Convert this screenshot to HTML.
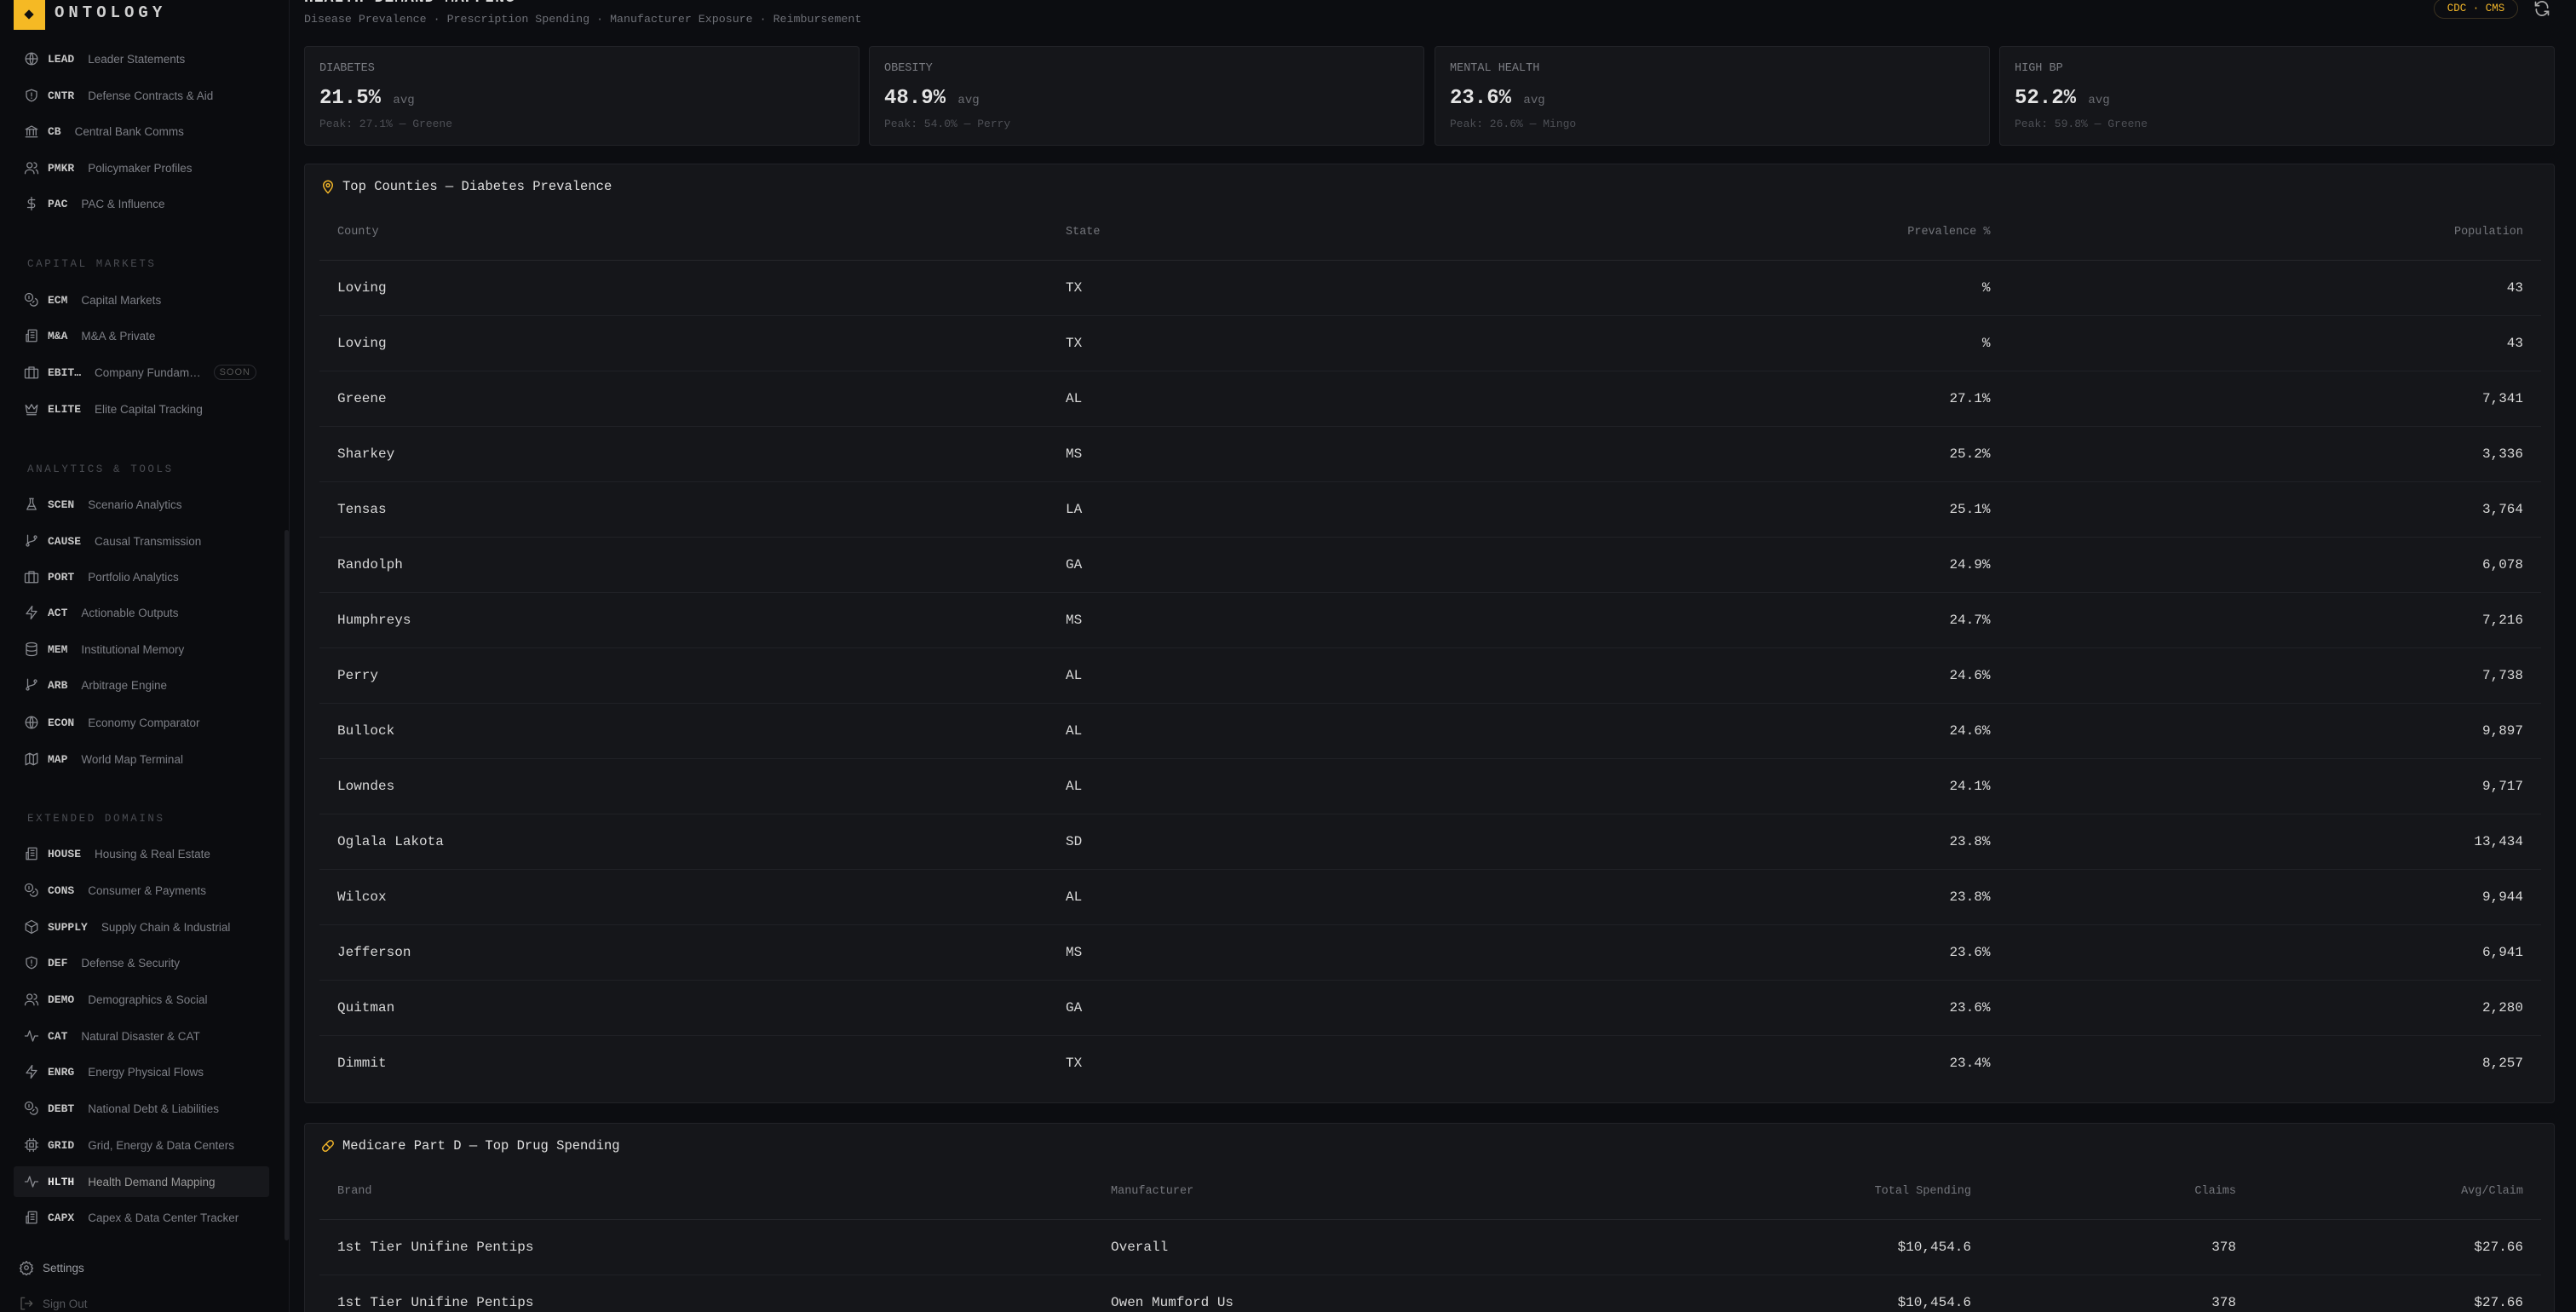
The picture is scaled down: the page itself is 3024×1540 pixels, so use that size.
<!DOCTYPE html>
<html><head><meta charset="utf-8"><style>
*{margin:0;padding:0;box-sizing:border-box}
html,body{width:3024px;height:1540px;overflow:hidden;background:#0c0d11;font-family:"Liberation Mono",monospace;color:#d6d6d6}
#side{position:absolute;left:0;top:0;width:340px;height:1540px;background:#0b0c0f;border-right:1px solid #1a1b20;overflow:hidden}
.logo{position:absolute;left:16px;top:0;width:37px;height:35px;background:#f5b924}
.logo i{position:absolute;left:14px;top:13px;width:8px;height:8px;background:#111;transform:rotate(45deg)}
.brand{position:absolute;left:64px;top:4px;font-size:19px;font-weight:bold;letter-spacing:5px;color:#d0d0d0}
.it{position:absolute;left:28px;height:24px;display:flex;align-items:center;white-space:nowrap}
.it svg{width:18px;height:18px;margin-right:10px;flex:none}
.it b{font-size:13px;color:#c8c8c8;font-weight:bold;margin-right:16px}
.it span{font-family:"Liberation Sans",sans-serif;font-size:13.5px;color:#7d7f86}
.sec{position:absolute;left:32px;font-size:12.5px;letter-spacing:2.6px;color:#4a4c52}
.soon{font-family:"Liberation Sans",sans-serif;font-size:11px;color:#555;border:1px solid #2a2b30;border-radius:10px;padding:2px 6px;margin-left:15px;letter-spacing:1px}
.hl{position:absolute;left:16px;top:1369px;width:300px;height:36px;background:#17181c;border-radius:3px}
.sb{position:absolute;left:334px;top:622px;width:5px;height:834px;background:#1d1e23;border-radius:3px}
#main{position:absolute;left:340px;top:0;width:2684px;height:1540px;overflow:hidden}
.ttl{position:absolute;left:17px;top:-12px;font-size:18px;font-weight:bold;letter-spacing:1px;color:#ddd}
.sub{position:absolute;left:17px;top:15px;font-size:13.3px;color:#6e7077}
.badge{position:absolute;left:2517px;top:-2px;width:99px;height:24px;border:1px solid #3a3120;border-radius:12px;color:#f0b429;font-size:12.5px;text-align:center;line-height:22px}
.card{position:absolute;top:54px;height:117px;width:652px;background:#15161a;border:1px solid #222328;border-radius:4px}
.card .l{position:absolute;left:17px;top:18px;font-size:13.5px;color:#7a7c82}
.card .v{position:absolute;left:17px;top:47px;font-size:24px;font-weight:bold;color:#e4e4e4}
.card .v small{font-size:14px;font-weight:normal;color:#6a6c72}
.card .p{position:absolute;left:17px;top:83px;font-size:13px;color:#4d4f55}
.panel{position:absolute;left:17px;width:2642px;background:#15161a;border:1px solid #222328;border-radius:4px}
.ph{position:absolute;left:18px;top:16px;display:flex;align-items:center;font-size:15.5px;color:#e0e0e0}
.ph svg{margin-right:8px}
table{position:absolute;left:17px;width:2608px;border-collapse:collapse;font-size:16px}
th{font-weight:normal;font-size:13.5px;color:#74767c;height:64px;text-align:left;border-bottom:1px solid #25262b;padding:0 21px}
td{height:65px;border-bottom:1px solid #202126;padding:0 21px;color:#d8d8d8}
tr:last-child td{border-bottom:none}
.r{text-align:right}
</style></head><body>
<div id="side">
<div class="logo"><i></i></div><div class="brand">ONTOLOGY</div>
<div class="hl"></div>
<div class="sb"></div>
<svg width="0" height="0" style="position:absolute"><defs>
<symbol id="globe" viewBox="0 0 24 24"><circle cx="12" cy="12" r="9"/><path d="M3 12h18M12 3c3 3 3 15 0 18M12 3c-3 3-3 15 0 18"/></symbol>
<symbol id="shield" viewBox="0 0 24 24"><path d="M12 3l8 3v6c0 5-4 8-8 9-4-1-8-4-8-9V6z"/><path d="M12 8v5M12 16v.5"/></symbol>
<symbol id="bank" viewBox="0 0 24 24"><path d="M3 9l9-5 9 5zM5 10v8M9 10v8M15 10v8M19 10v8M3 21h18"/></symbol>
<symbol id="users" viewBox="0 0 24 24"><circle cx="9" cy="8" r="4"/><path d="M2 21c0-4 3-6 7-6s7 2 7 6M16 4a4 4 0 010 8M19 15c2 1 3 3 3 6"/></symbol>
<symbol id="dollar" viewBox="0 0 24 24"><path d="M12 2v20M17 6H10a3 3 0 000 6h4a3 3 0 010 6H6"/></symbol>
<symbol id="coins" viewBox="0 0 24 24"><circle cx="8" cy="8" r="6"/><path d="M18 10a6 6 0 11-8 8M8 6v4M16 14l-2 2"/></symbol>
<symbol id="bldg" viewBox="0 0 24 24"><rect x="7" y="3" width="13" height="18" rx="1"/><path d="M7 10H4v11h3M11 7h5M11 11h5M11 15h5"/></symbol>
<symbol id="brief" viewBox="0 0 24 24"><rect x="2" y="7" width="20" height="14" rx="1"/><path d="M8 7V4h8v3M8 7v14M16 7v14"/></symbol>
<symbol id="crown" viewBox="0 0 24 24"><path d="M3 6l5 6 4-7 4 7 5-6-2 12H5zM5 21h14"/></symbol>
<symbol id="flask" viewBox="0 0 24 24"><path d="M9 3h6M10 3v7l-5 10h14l-5-10V3M7 15h10"/></symbol>
<symbol id="branch" viewBox="0 0 24 24"><circle cx="6" cy="18" r="2"/><circle cx="18" cy="6" r="2"/><path d="M6 3v13M18 8c0 6-12 4-12 8"/></symbol>
<symbol id="bolt" viewBox="0 0 24 24"><path d="M13 2L4 14h8l-1 8 9-12h-8z"/></symbol>
<symbol id="db" viewBox="0 0 24 24"><ellipse cx="12" cy="5" rx="8" ry="3"/><path d="M4 5v14c0 2 4 3 8 3s8-1 8-3V5M4 12c0 2 4 3 8 3s8-1 8-3"/></symbol>
<symbol id="map" viewBox="0 0 24 24"><path d="M3 6l6-3 6 3 6-3v15l-6 3-6-3-6 3zM9 3v15M15 6v15"/></symbol>
<symbol id="box" viewBox="0 0 24 24"><path d="M12 2l9 5v10l-9 5-9-5V7zM3 7l9 5 9-5M12 12v10"/></symbol>
<symbol id="pulse" viewBox="0 0 24 24"><path d="M2 12h4l3-8 5 16 3-8h5"/></symbol>
<symbol id="chip" viewBox="0 0 24 24"><rect x="5" y="5" width="14" height="14" rx="2"/><rect x="9" y="9" width="6" height="6"/><path d="M9 2v3M15 2v3M9 19v3M15 19v3M2 9h3M2 15h3M19 9h3M19 15h3"/></symbol>
<symbol id="gear" viewBox="0 0 24 24"><circle cx="12" cy="12" r="3"/><path d="M12 2l2 3 3-1 1 3 3 1-1 3 2 2-2 2 1 3-3 1-1 3-3-1-2 3-2-3-3 1-1-3-3-1 1-3-2-2 2-2-1-3 3-1 1-3 3 1z"/></symbol>
<symbol id="out" viewBox="0 0 24 24"><path d="M9 3H4v18h5M10 12h11M17 8l4 4-4 4"/></symbol>
</defs></svg>
<div id="nav" style="fill:none;stroke:#8a8c92;stroke-width:1.7;stroke-linecap:round;stroke-linejoin:round">
<div class="it" style="top:57px"><svg><use href="#globe"/></svg><b>LEAD</b><span>Leader Statements</span></div>
<div class="it" style="top:100px"><svg><use href="#shield"/></svg><b>CNTR</b><span>Defense Contracts &amp; Aid</span></div>
<div class="it" style="top:142px"><svg><use href="#bank"/></svg><b>CB</b><span>Central Bank Comms</span></div>
<div class="it" style="top:185px"><svg><use href="#users"/></svg><b>PMKR</b><span>Policymaker Profiles</span></div>
<div class="it" style="top:227px"><svg><use href="#dollar"/></svg><b>PAC</b><span>PAC &amp; Influence</span></div>
<div class="sec" style="top:303px">CAPITAL MARKETS</div>
<div class="it" style="top:340px"><svg><use href="#coins"/></svg><b>ECM</b><span>Capital Markets</span></div>
<div class="it" style="top:382px"><svg><use href="#bldg"/></svg><b>M&amp;A</b><span>M&amp;A &amp; Private</span></div>
<div class="it" style="top:425px"><svg><use href="#brief"/></svg><b>EBIT…</b><span>Company Fundam…</span><em class="soon" style="font-style:normal">SOON</em></div>
<div class="it" style="top:468px"><svg><use href="#crown"/></svg><b>ELITE</b><span>Elite Capital Tracking</span></div>
<div class="sec" style="top:544px">ANALYTICS &amp; TOOLS</div>
<div class="it" style="top:580px"><svg><use href="#flask"/></svg><b>SCEN</b><span>Scenario Analytics</span></div>
<div class="it" style="top:623px"><svg><use href="#branch"/></svg><b>CAUSE</b><span>Causal Transmission</span></div>
<div class="it" style="top:665px"><svg><use href="#brief"/></svg><b>PORT</b><span>Portfolio Analytics</span></div>
<div class="it" style="top:707px"><svg><use href="#bolt"/></svg><b>ACT</b><span>Actionable Outputs</span></div>
<div class="it" style="top:750px"><svg><use href="#db"/></svg><b>MEM</b><span>Institutional Memory</span></div>
<div class="it" style="top:792px"><svg><use href="#branch"/></svg><b>ARB</b><span>Arbitrage Engine</span></div>
<div class="it" style="top:836px"><svg><use href="#globe"/></svg><b>ECON</b><span>Economy Comparator</span></div>
<div class="it" style="top:879px"><svg><use href="#map"/></svg><b>MAP</b><span>World Map Terminal</span></div>
<div class="sec" style="top:954px">EXTENDED DOMAINS</div>
<div class="it" style="top:990px"><svg><use href="#bldg"/></svg><b>HOUSE</b><span>Housing &amp; Real Estate</span></div>
<div class="it" style="top:1033px"><svg><use href="#coins"/></svg><b>CONS</b><span>Consumer &amp; Payments</span></div>
<div class="it" style="top:1076px"><svg><use href="#box"/></svg><b>SUPPLY</b><span>Supply Chain &amp; Industrial</span></div>
<div class="it" style="top:1118px"><svg><use href="#shield"/></svg><b>DEF</b><span>Defense &amp; Security</span></div>
<div class="it" style="top:1161px"><svg><use href="#users"/></svg><b>DEMO</b><span>Demographics &amp; Social</span></div>
<div class="it" style="top:1204px"><svg><use href="#pulse"/></svg><b>CAT</b><span>Natural Disaster &amp; CAT</span></div>
<div class="it" style="top:1246px"><svg><use href="#bolt"/></svg><b>ENRG</b><span>Energy Physical Flows</span></div>
<div class="it" style="top:1289px"><svg><use href="#coins"/></svg><b>DEBT</b><span>National Debt &amp; Liabilities</span></div>
<div class="it" style="top:1332px"><svg><use href="#chip"/></svg><b>GRID</b><span>Grid, Energy &amp; Data Centers</span></div>
<div class="it" style="top:1375px"><svg><use href="#pulse"/></svg><b style="color:#e8e8e8">HLTH</b><span style="color:#999">Health Demand Mapping</span></div>
<div class="it" style="top:1417px"><svg><use href="#bldg"/></svg><b>CAPX</b><span>Capex &amp; Data Center Tracker</span></div>
<div class="it" style="top:1476px;left:22px"><svg><use href="#gear"/></svg><span style="color:#9a9ca2">Settings</span></div>
<div class="it" style="top:1518px;left:22px"><svg style="stroke:#555"><use href="#out"/></svg><span style="color:#55575c">Sign Out</span></div>
</div>
</div>
<div id="main">
<div class="ttl">HEALTH DEMAND MAPPING</div>
<div class="sub">Disease Prevalence · Prescription Spending · Manufacturer Exposure · Reimbursement</div>
<div class="badge">CDC · CMS</div>
<svg style="position:absolute;left:2634px;top:0" width="20" height="20" viewBox="0 0 24 24" fill="none" stroke="#aaa" stroke-width="2" stroke-linecap="round"><path d="M20 11A8 8 0 006 5L3 8M3 3v5h5M4 13a8 8 0 0014 6l3-3M21 21v-5h-5"/></svg>
<div class="card" style="left:17px"><div class="l">DIABETES</div><div class="v">21.5% <small>avg</small></div><div class="p">Peak: 27.1% — Greene</div></div>
<div class="card" style="left:680px"><div class="l">OBESITY</div><div class="v">48.9% <small>avg</small></div><div class="p">Peak: 54.0% — Perry</div></div>
<div class="card" style="left:1344px"><div class="l">MENTAL HEALTH</div><div class="v">23.6% <small>avg</small></div><div class="p">Peak: 26.6% — Mingo</div></div>
<div class="card" style="left:2007px"><div class="l">HIGH BP</div><div class="v">52.2% <small>avg</small></div><div class="p">Peak: 59.8% — Greene</div></div>

<div class="panel" style="top:192px;height:1103px">
<div class="ph"><svg width="18" height="20" viewBox="0 0 24 24" fill="none" stroke="#f0b429" stroke-width="2"><path d="M12 22s-7-7-7-12a7 7 0 0114 0c0 5-7 12-7 12z"/><circle cx="12" cy="10" r="2.5"/></svg>Top Counties — Diabetes Prevalence</div>
<table style="top:48px">
<tr><th style="width:855px">County</th><th>State</th><th class="r">Prevalence %</th><th class="r">Population</th></tr>
<tr><td>Loving</td><td>TX</td><td class="r">%</td><td class="r">43</td></tr>
<tr><td>Loving</td><td>TX</td><td class="r">%</td><td class="r">43</td></tr>
<tr><td>Greene</td><td>AL</td><td class="r">27.1%</td><td class="r">7,341</td></tr>
<tr><td>Sharkey</td><td>MS</td><td class="r">25.2%</td><td class="r">3,336</td></tr>
<tr><td>Tensas</td><td>LA</td><td class="r">25.1%</td><td class="r">3,764</td></tr>
<tr><td>Randolph</td><td>GA</td><td class="r">24.9%</td><td class="r">6,078</td></tr>
<tr><td>Humphreys</td><td>MS</td><td class="r">24.7%</td><td class="r">7,216</td></tr>
<tr><td>Perry</td><td>AL</td><td class="r">24.6%</td><td class="r">7,738</td></tr>
<tr><td>Bullock</td><td>AL</td><td class="r">24.6%</td><td class="r">9,897</td></tr>
<tr><td>Lowndes</td><td>AL</td><td class="r">24.1%</td><td class="r">9,717</td></tr>
<tr><td>Oglala Lakota</td><td>SD</td><td class="r">23.8%</td><td class="r">13,434</td></tr>
<tr><td>Wilcox</td><td>AL</td><td class="r">23.8%</td><td class="r">9,944</td></tr>
<tr><td>Jefferson</td><td>MS</td><td class="r">23.6%</td><td class="r">6,941</td></tr>
<tr><td>Quitman</td><td>GA</td><td class="r">23.6%</td><td class="r">2,280</td></tr>
<tr><td>Dimmit</td><td>TX</td><td class="r">23.4%</td><td class="r">8,257</td></tr>
</table></div>

<div class="panel" style="top:1318px;height:260px">
<div class="ph"><svg width="18" height="20" viewBox="0 0 24 24" fill="none" stroke="#f0b429" stroke-width="2"><path d="M5 19a4 4 0 010-6l8-8a4 4 0 016 6l-8 8a4 4 0 01-6 0zM9 9l6 6"/></svg>Medicare Part D — Top Drug Spending</div>
<table style="top:48px">
<tr><th style="width:908px">Brand</th><th style="width:700px">Manufacturer</th><th class="r">Total Spending</th><th class="r" style="width:311px">Claims</th><th class="r" style="width:337px">Avg/Claim</th></tr>
<tr><td>1st Tier Unifine Pentips</td><td>Overall</td><td class="r">$10,454.6</td><td class="r">378</td><td class="r">$27.66</td></tr>
<tr><td>1st Tier Unifine Pentips</td><td>Owen Mumford Us</td><td class="r">$10,454.6</td><td class="r">378</td><td class="r">$27.66</td></tr>
</table></div>
</div>
</body></html>
